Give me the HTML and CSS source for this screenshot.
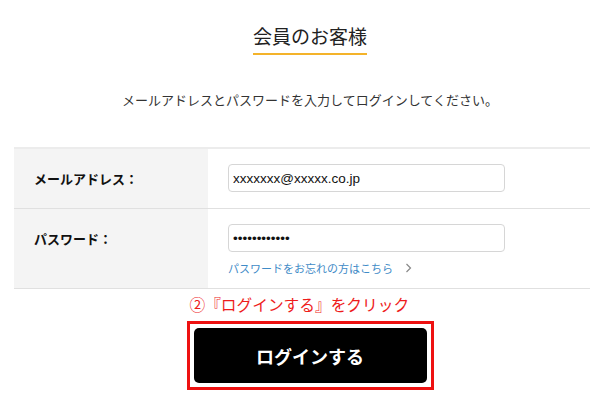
FILE: index.html
```html
<html>
  <head>
    <meta charset="utf-8">
    <title>会員のお客様</title>
    <link rel="stylesheet" href="styles.css">
  </head>

  <body>
    <div class='page'>
      <h1 class='heading'><span>会員のお客様</span></h1>
      <p class='lead'>メールアドレスとパスワードを入力してログインしてください。</p>

      <div class='form-table'>
        <div class='row'>
          <div class='label'>メールアドレス：</div>
          <div class='field'>
            <input class='text-input' type='text' value='xxxxxxx@xxxxx.co.jp'>
          </div>
        </div>
        <div class='row'>
          <div class='label'>パスワード：</div>
          <div class='field'>
            <input class='text-input' type='password' value='xxxxxxxxxxxx'>
            <a class='forgot' href='#'>パスワードをお忘れの方はこちら<span class='chev'>
              <svg width='7' height='10' viewBox='0 0 7 10'><path d='M1.5 1 L5.5 5 L1.5 9' fill='none' stroke='#888' stroke-width='1.2'/></svg>
            </span></a>
          </div>
        </div>
      </div>

      <div class='cta'>
        <p class='note'>②『ログインする』をクリック</p>
        <div class='btn-frame'>
          <button class='btn-login'>ログインする</button>
        </div>
      </div>
    </div>
  </body>
</html>
```

FILE: styles.css
```css
body{
  margin: 0;
  overflow: hidden;
  background: #fff;
  font-family: "Noto Sans CJK JP", "Noto Sans", sans-serif;
  color: #222;
}

.page{
  width: 592px;
  margin-left: 14px;
  text-align: center;
}

.heading{
  margin: 0;
  padding-top: 21px;
  font-size: 19px;
  font-weight: normal;
  line-height: 30px;
}

.heading span{
  display: inline-block;
  padding-bottom: 2px;
  border-bottom: 2px solid #f4b32a;
}

.lead{
  margin: 36px 0 0;
  font-size: 13px;
  line-height: 18px;
  color: #333;
}

.form-table{
  margin-top: 38px;
  border-top: 2px solid #ececec;
  text-align: left;
}

.row{
  display: flex;
  border-bottom: 1px solid #e0e0e0;
}

.label{
  width: 194px;
  flex-shrink: 0;
  box-sizing: border-box;
  padding: 16px 20px;
  background: #f4f4f4;
  font-size: 13px;
  font-weight: bold;
  line-height: 27px;
  color: #111;
}

.field{
  padding: 15px 20px 14px;
}

.row:last-child .field{
  padding-bottom: 12px;
}

.text-input{
  display: block;
  width: 277px;
  height: 28px;
  box-sizing: border-box;
  padding: 0 4px;
  border: 1px solid #d6d6d6;
  border-radius: 4px;
  font-family: "Liberation Sans", Arial, sans-serif;
  font-size: 13.5px;
  color: #111;
  outline: none;
}

.forgot{
  display: inline-block;
  margin-top: 8px;
  font-size: 11px;
  line-height: 16px;
  color: #3f8bc7;
  text-decoration: none;
}

.chev{
  margin-left: 10px;
}

.cta{
  display: inline-block;
  text-align: left;
}

.note{
  margin: 5px 0 0;
  padding-left: 3px;
  font-size: 15.7px;
  line-height: 22px;
  color: #ee1c1c;
}

.btn-frame{
  display: inline-block;
  margin-top: 5px;
  padding: 4px;
  border: 3px solid #ee1111;
  line-height: 0;
}

.btn-login{
  width: 233px;
  height: 55px;
  border: none;
  border-radius: 5px;
  background: #000;
  color: #fff;
  font-family: "Noto Sans CJK JP", sans-serif;
  font-size: 18px;
  font-weight: bold;
}
```
